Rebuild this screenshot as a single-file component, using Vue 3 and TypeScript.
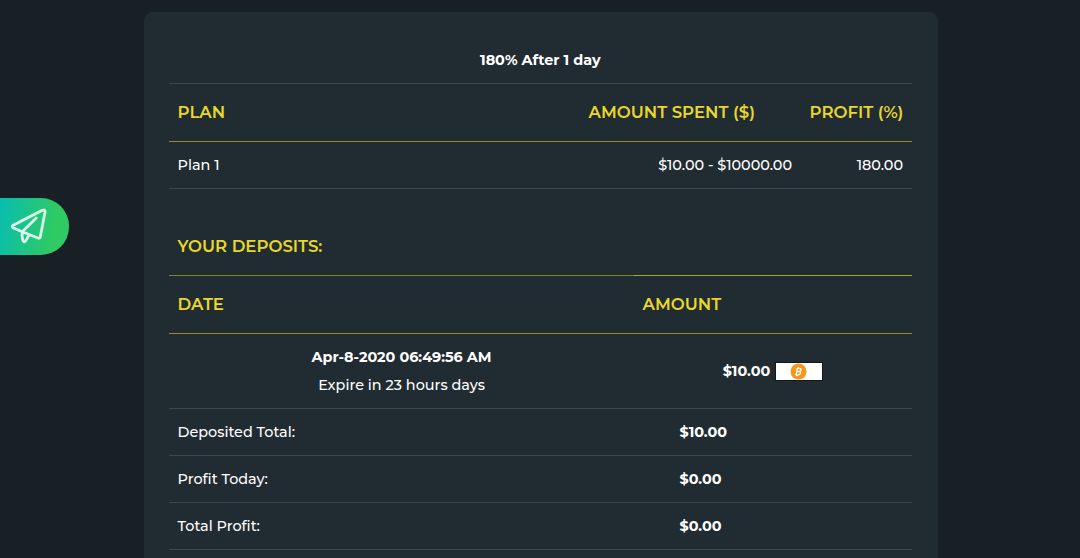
<template>
  <div class="page">
    <a class="telegram" aria-label="Telegram">
      <svg viewBox="0 0 40 40" width="40" height="40">
        <path d="M3.2 18.3 L32.3 3.3 Q35.4 2 35 5.2 L30.3 29.8 Q29.8 31.8 27.8 31 L13.4 25.3 L3 20.8 Q1.3 19.4 3.2 18.3 Z" />
        <path d="M26.2 11 L13 24 L12 27.8 Q12.6 35 14.6 34.8 Q16 34.4 18.8 28" />
      </svg>
    </a>

    <main class="card">
      <section class="plans">
        <div class="row title"><b>{{ plan.title }}</b></div>
        <div class="row head plan-grid">
          <span>PLAN</span>
          <span>AMOUNT SPENT ($)</span>
          <span class="right">PROFIT (%)</span>
        </div>
        <div class="row plan-grid">
          <span>{{ plan.name }}</span>
          <span class="right">{{ plan.range }}</span>
          <span class="right">{{ plan.profit }}</span>
        </div>
      </section>

      <section class="deposits">
        <div class="row head subtitle"><span>YOUR DEPOSITS:</span></div>
        <div class="row head deposit-grid">
          <span>DATE</span>
          <span>AMOUNT</span>
        </div>
        <div class="row entry deposit-grid">
          <div class="when">
            <b>{{ deposit.date }}</b>
            <span>{{ deposit.expire }}</span>
          </div>
          <div class="paid">
            <b>{{ deposit.amount }}</b>
            <svg class="coin" viewBox="0 0 48 20" width="48" height="20">
              <rect y="1" width="48" height="19" fill="#11171b" />
              <rect x="1" y="2" width="46" height="17" fill="#fff" />
              <circle cx="23.5" cy="10.5" r="8" fill="#f7981d" />
              <path
                d="M21.8 7.3 h2.4 q2.1 .2 1.7 1.7 q-.3 1.4 -2 1.5 q2 .2 1.6 1.7 q-.4 1.7 -2.7 1.7 h-2.5 M22.4 7.3 l-1.3 6.6 M21.9 10.5 h2.2 M23.5 6 l-.2 1.2 M22.1 14 l-.2 1.2"
                fill="none"
                stroke="#fff"
                stroke-width="1.3"
              />
            </svg>
          </div>
        </div>
        <div v-for="total in totals" :key="total.label" class="row total-grid">
          <span>{{ total.label }}</span>
          <b>{{ total.value }}</b>
        </div>
      </section>
    </main>
  </div>
</template>

<script setup lang="ts">
interface Total {
  label: string;
  value: string;
}

const plan = {
  title: '180% After 1 day',
  name: 'Plan 1',
  range: '$10.00 - $10000.00',
  profit: '180.00',
};

const deposit = {
  date: 'Apr-8-2020 06:49:56 AM',
  expire: 'Expire in 23 hours days',
  amount: '$10.00',
};

const totals: Total[] = [
  { label: 'Deposited Total:', value: '$10.00' },
  { label: 'Profit Today:', value: '$0.00' },
  { label: 'Total Profit:', value: '$0.00' },
];
</script>

<style>
body {
  margin: 0;
  background: #182025;
}
</style>

<style scoped>
.page {
  position: relative;
  height: 558px;
  box-sizing: border-box;
  padding: 12px 142px 0 144px;
  overflow: hidden;
  background: #182025;
  color: #fff;
  font-family: Montserrat, Inter, sans-serif;
  font-size: 14.4px;
  font-weight: 500;
}

.card {
  height: 600px;
  box-sizing: border-box;
  padding: 25px 26px 0 25px;
  border-radius: 9px;
  background: #212b32;
}

.row {
  display: flex;
  align-items: center;
  height: 47px;
  box-sizing: border-box;
  border-bottom: 1px solid #3d474a;
  white-space: nowrap;
}

.row > span,
.row > b {
  padding: 0 9px 0 8.6px;
}

.row > .right {
  text-align: right;
}

.title {
  justify-content: center;
}

.row.head {
  height: 58px;
  padding-bottom: 2px;
  border-bottom-color: #928d1c;
  color: #e8d829;
  font-size: 16.56px;
  font-weight: 600;
}

/* the rule under the subtitle is brighter over the amount column */
.row.subtitle {
  border-bottom: 0;
  padding-bottom: 3px;
  background: linear-gradient(90deg, #85831c 465px, #aaa522 465px) bottom / 100% 1px no-repeat;
}

.plan-grid {
  display: grid;
  grid-template-columns: 411px 221px 111px;
}

.deposit-grid {
  display: grid;
  grid-template-columns: 465px 278px;
}

.total-grid {
  display: grid;
  grid-template-columns: 502px 241px;
}

.deposits {
  margin-top: 29px;
}

.entry {
  height: 75px;
}

.when {
  display: flex;
  flex-direction: column;
  align-items: center;
  line-height: 28px;
}

.paid {
  display: flex;
  align-items: center;
  justify-content: center;
  gap: 5px;
}

b {
  font-weight: 700;
}

.telegram {
  position: absolute;
  top: 198px;
  left: 0;
  width: 69px;
  height: 57px;
  box-sizing: border-box;
  padding: 9px 0 0 10px;
  border-radius: 0 28px 28px 0;
  background: linear-gradient(100deg, #08bdb0, #2fca63 75%);
}

.telegram svg {
  display: block;
  fill: none;
  stroke: #d8fbe9;
  stroke-width: 2.8;
  stroke-linecap: round;
  stroke-linejoin: round;
}
</style>
